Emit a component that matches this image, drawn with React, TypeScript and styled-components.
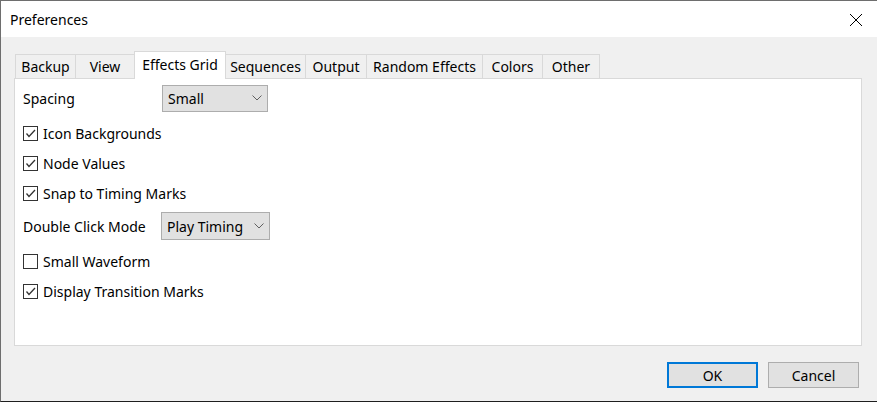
import React from "react";
import styled, { createGlobalStyle } from "styled-components";

const GlobalStyle = createGlobalStyle`
  html, body { margin: 0; padding: 0; background: #f0f0f0; }
  body { font-family: "Noto Sans", "Open Sans", sans-serif; font-size: 14px; color: #000; }
  * { box-sizing: border-box; }
`;

const Window = styled.div`
  width: 877px;
  height: 402px;
  display: flex;
  flex-direction: column;
  background: #f0f0f0;
  border-top: 1px solid #6e6e6e;
  border-left: 1px solid #6e6e6e;
  border-bottom: 1px solid #1e1e1e;
`;

const TitleBar = styled.div`
  height: 36px;
  flex: none;
  background: #fff;
  display: flex;
  align-items: center;
  justify-content: space-between;
  padding: 0 14px 0 9px;
  font-size: 14px;
`;

const CloseButton = styled.div`
  width: 14px;
  height: 14px;
  display: flex;
  align-items: center;
  justify-content: center;
  margin-top: 1px;
`;

const Body = styled.div`
  flex: 1;
  display: flex;
  flex-direction: column;
  padding: 14px 15px 0 13px;
`;

const TabStrip = styled.div`
  display: flex;
  align-items: flex-end;
  height: 28px;
  padding-left: 1px;
  margin-bottom: -1px;
  position: relative;
  z-index: 1;
`;

const Tab = styled.div<{ $w: number; $active?: boolean }>`
  width: ${(p) => p.$w}px;
  height: ${(p) => (p.$active ? 28 : 25)}px;
  flex: none;
  display: flex;
  align-items: center;
  justify-content: center;
  background: ${(p) => (p.$active ? "#fff" : "#f0f0f0")};
  border: 1px solid #d9d9d9;
  border-bottom: ${(p) => (p.$active ? "none" : "1px solid #d9d9d9")};
  margin-left: -1px;
  padding-bottom: ${(p) => (p.$active ? 2 : 0)}px;
  white-space: nowrap;
  font-size: 14px;
  &:first-child { margin-left: 0; }
`;

const Panel = styled.div`
  height: 268px;
  background: #fff;
  border: 1px solid #d9d9d9;
  padding: 1px 8px 0 8px;
  display: flex;
  flex-direction: column;
`;

const SelectRow = styled.div`
  height: 28px;
  margin: 4px 0 6px;
  display: flex;
  align-items: center;
`;

const Label = styled.div<{ $w: number }>`
  width: ${(p) => p.$w}px;
  flex: none;
  white-space: nowrap;
`;

const Select = styled.div<{ $w: number; $h: number }>`
  width: ${(p) => p.$w}px;
  height: ${(p) => p.$h}px;
  background: #e1e1e1;
  border: 1px solid #adadad;
  display: flex;
  align-items: center;
  justify-content: space-between;
  padding: 0 5px 0 5px;
  white-space: nowrap;
`;

const CheckRow = styled.label`
  height: 30px;
  display: flex;
  align-items: center;
  gap: 5px;
  white-space: nowrap;
`;

const Box = styled.span`
  width: 15px;
  height: 15px;
  border: 1px solid #333;
  background: #fff;
  display: flex;
  align-items: center;
  justify-content: center;
  flex: none;
`;

const Footer = styled.div`
  display: flex;
  justify-content: flex-end;
  gap: 10px;
  padding: 16px 3px 0 0;
`;

const Button = styled.div<{ $primary?: boolean }>`
  width: 91px;
  height: 26px;
  background: #e1e1e1;
  border: ${(p) => (p.$primary ? "2px solid #0078d7" : "1px solid #adadad")};
  display: flex;
  align-items: center;
  justify-content: center;
  font-size: 14px;
`;

const Chevron = () => (
  <svg width="10" height="6" viewBox="0 0 10 6">
    <polyline points="0.5,0.5 5,5 9.5,0.5" fill="none" stroke="#606060" strokeWidth="1" />
  </svg>
);

const Check = ({ checked }: { checked: boolean }) => (
  <Box>
    {checked && (
      <svg width="13" height="13" viewBox="0 0 13 13">
        <polyline points="2.5,6.5 5,9.5 11,3" fill="none" stroke="#333" strokeWidth="1.3" />
      </svg>
    )}
  </Box>
);

const tabs: { name: string; w: number; active?: boolean }[] = [
  { name: "Backup", w: 61 },
  { name: "View", w: 60 },
  { name: "Effects Grid", w: 92, active: true },
  { name: "Sequences", w: 81 },
  { name: "Output", w: 62 },
  { name: "Random Effects", w: 117 },
  { name: "Colors", w: 61 },
  { name: "Other", w: 58 },
];

export default function App() {
  return (
    <>
      <GlobalStyle />
      <Window>
        <TitleBar>
          <span>Preferences</span>
          <CloseButton>
            <svg width="14" height="14" viewBox="0 0 14 14">
              <path d="M1 1 L13 13 M13 1 L1 13" stroke="#000" strokeWidth="1" />
            </svg>
          </CloseButton>
        </TitleBar>
        <Body>
          <TabStrip>
            {tabs.map((t) => (
              <Tab key={t.name} $w={t.w} $active={t.active}>
                {t.name}
              </Tab>
            ))}
          </TabStrip>
          <Panel>
            <SelectRow>
              <Label $w={139}>Spacing</Label>
              <Select $w={106} $h={27}>
                <span>Small</span>
                <Chevron />
              </Select>
            </SelectRow>
            <CheckRow>
              <Check checked />
              Icon Backgrounds
            </CheckRow>
            <CheckRow>
              <Check checked />
              Node Values
            </CheckRow>
            <CheckRow>
              <Check checked />
              Snap to Timing Marks
            </CheckRow>
            <SelectRow>
              <Label $w={138}>Double Click Mode</Label>
              <Select $w={109} $h={28}>
                <span>Play Timing</span>
                <Chevron />
              </Select>
            </SelectRow>
            <CheckRow>
              <Check checked={false} />
              Small Waveform
            </CheckRow>
            <CheckRow>
              <Check checked />
              Display Transition Marks
            </CheckRow>
          </Panel>
          <Footer>
            <Button $primary>OK</Button>
            <Button>Cancel</Button>
          </Footer>
        </Body>
      </Window>
    </>
  );
}
